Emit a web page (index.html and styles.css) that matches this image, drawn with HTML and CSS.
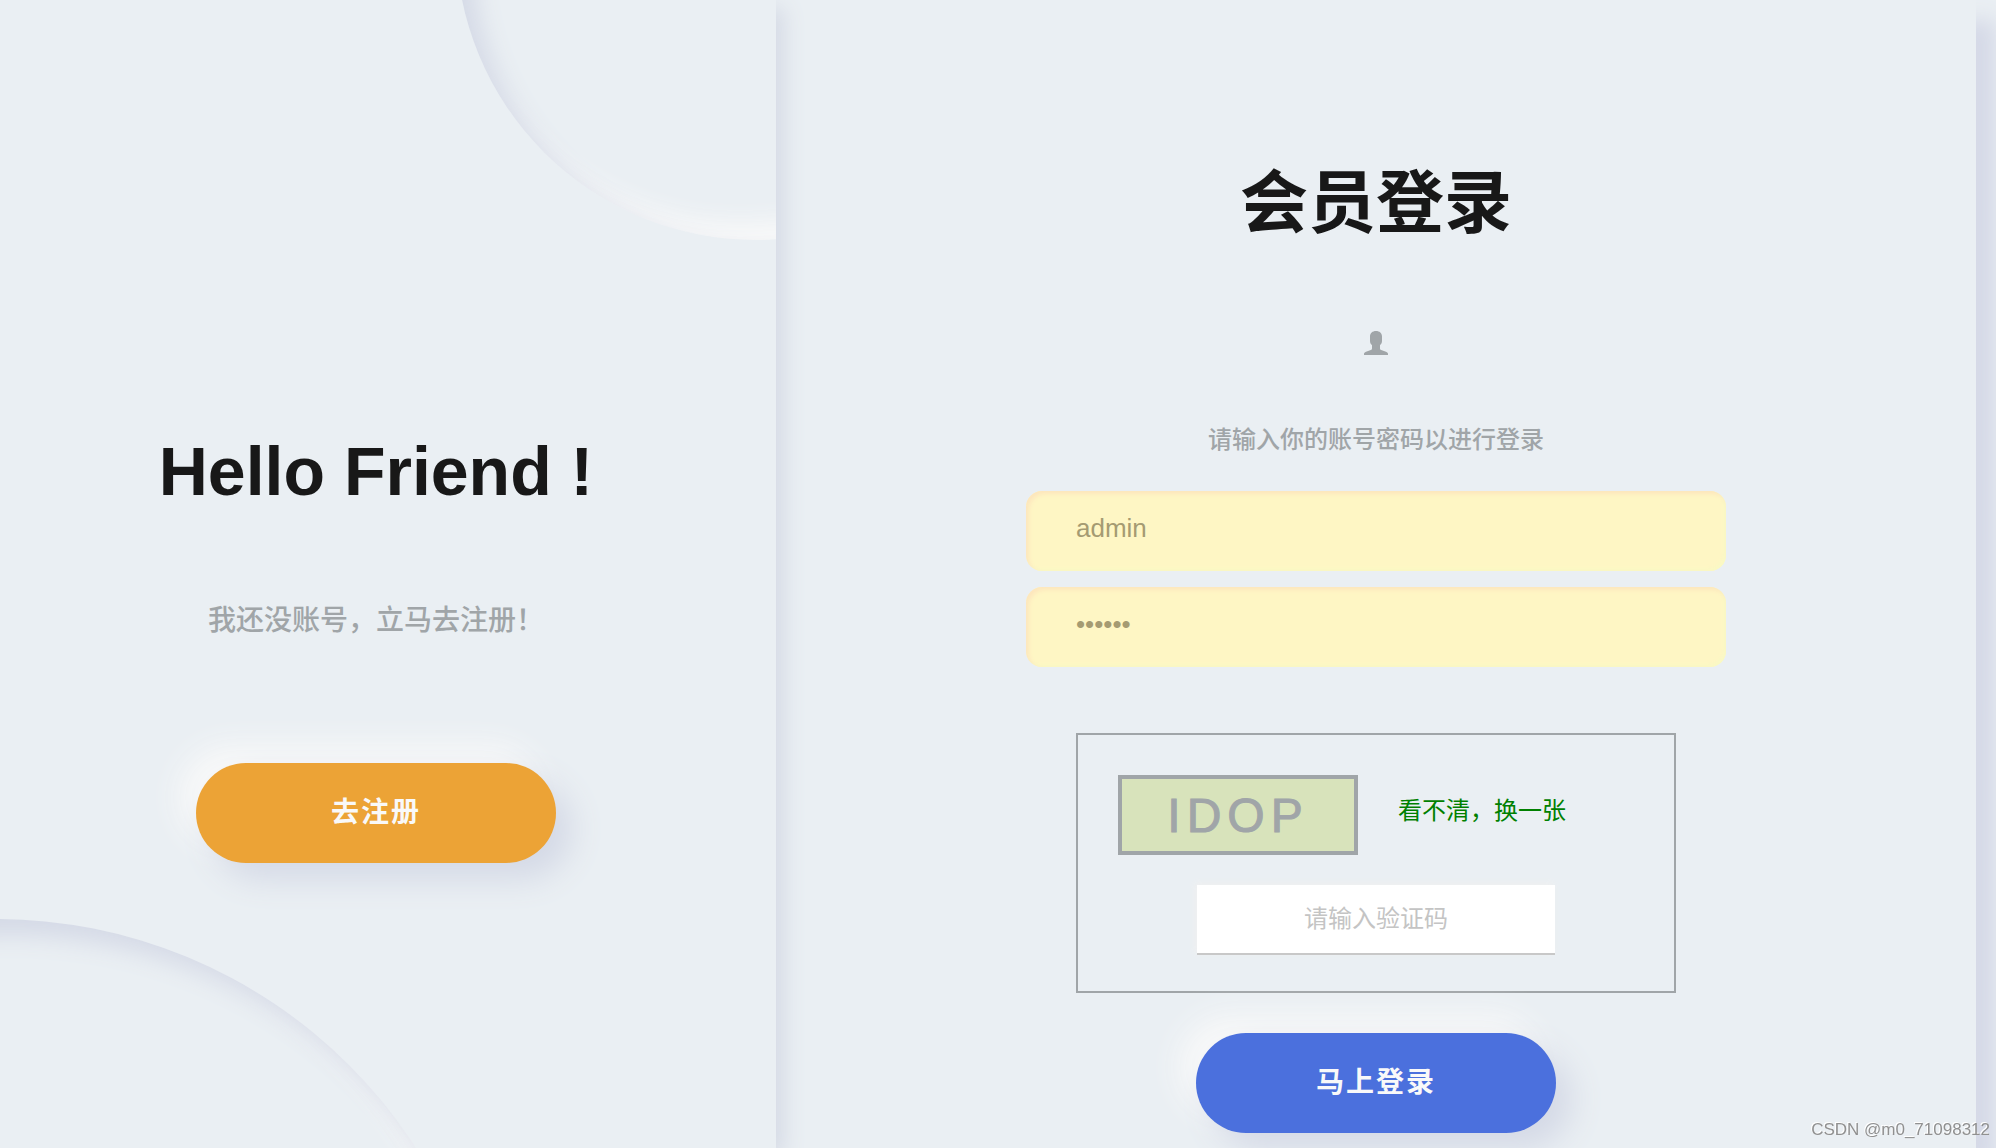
FILE: index.html
```html
<!DOCTYPE html>
<html lang="zh-CN">
<head>
    <meta charset="UTF-8">
    <meta name="viewport" content="width=device-width, initial-scale=1.0">
    <title>会员登录</title>
    <link rel="stylesheet" href="styles.css">
</head>
<body>
    <div class="shell">
        <!-- 左侧切换区 -->
        <aside class="switch">
            <div class="circle circle-bottom"></div>
            <div class="circle circle-top"></div>
            <h2 class="title">Hello Friend !</h2>
            <p class="description">我还没账号，立马去注册！</p>
            <button class="button button-register" type="button">去注册</button>
        </aside>

        <!-- 登录表单 -->
        <main class="main">
            <form class="form" onsubmit="return false">
                <h1 class="title">会员登录</h1>
                <svg class="user-icon" viewBox="0 0 24 24" aria-hidden="true">
                    <path d="M12 0C8.500 0 6 2.200 6 5.500V10c0 1.800.800 3.200 2 4.200v3.300c0 .900-.400 1.300-1.200 1.600L2 20.800C.700 21.300 0 22 0 23v1h24v-1c0-1-.700-1.700-2-2.200l-4.800-1.700c-.800-.300-1.200-.700-1.200-1.600v-3.300c1.200-1 2-2.400 2-4.200V5.500C18 2.200 15.500 0 12 0z"/>
                </svg>
                <p class="hint">请输入你的账号密码以进行登录</p>
                <input class="field" type="text" value="admin" aria-label="账号">
                <input class="field" type="password" value="123456" aria-label="密码">

                <div class="captcha">
                    <div class="captcha-row">
                        <div class="captcha-code">IDOP</div>
                        <a class="captcha-change" href="#">看不清，换一张</a>
                    </div>
                    <input class="captcha-input" type="text" placeholder="请输入验证码" aria-label="验证码">
                </div>

                <button class="button button-login" type="submit">马上登录</button>
            </form>
        </main>
    </div>
    <div class="watermark">CSDN @m0_71098312</div>
</body>
</html>
```

FILE: styles.css
```css
* {
    box-sizing: border-box;
    margin: 0;
    padding: 0;
}
body {
    font-family: "Liberation Sans", Arial, "Noto Sans CJK SC", sans-serif;
    font-size: 24px;
    color: #a0a5a8;
    background: #fff;
    height: 100vh;
    overflow: hidden;
}
.shell {
    display: grid;
    grid-template-columns: 97fr 150fr;
    height: 100vh;
    margin-right: 8px;
    padding-right: 20px;
    background: #eaeff3;
    overflow: hidden;
}

/* 左侧 */
.switch {
    position: relative;
    z-index: 2;
    display: flex;
    flex-direction: column;
    align-items: center;
    padding: 431px 24px 0 0;
    overflow: hidden;
    background: #eaeff3;
    box-shadow: 8px 8px 20px #d5dae5;
}
.circle {
    position: absolute;
    border-radius: 50%;
    box-shadow: inset 16px 16px 24px #d4d9e6, inset -16px -16px 24px #f9f9f9;
}
.circle-bottom {
    width: 1000px;
    height: 1000px;
    top: 919px;
    left: -504px;
}
.circle-top {
    width: 600px;
    height: 600px;
    top: -360px;
    left: 456px;
}
.title {
    font-size: 68px;
    line-height: 80px;
    font-weight: 700;
    color: #181818;
}
.description {
    margin-top: 90px;
    font-size: 28px;
    line-height: 40px;
    font-weight: 500;
}
.button {
    position: relative;
    flex: none;
    width: 360px;
    height: 100px;
    border: none;
    border-radius: 50px;
    padding-bottom: 6px;
    font-family: inherit;
    font-size: 28px;
    font-weight: 700;
    letter-spacing: 2px;
    color: #f9f9f9;
    box-shadow: 16px 16px 32px #d4d9e6, -16px -16px 32px #f9f9f9;
    cursor: pointer;
}
.button-register {
    margin-top: 122px;
    background: #eca336;
}

/* 右侧 */
.main {
    box-shadow: 20px 20px 20px #d5d9e7;
}
.form {
    display: flex;
    flex-direction: column;
    align-items: center;
    padding-top: 163px;
}
.user-icon {
    width: 24px;
    height: 24px;
    margin-top: 88px;
    fill: #a0a5a8;
}
.hint {
    margin-top: 65px;
    margin-bottom: 31px;
    line-height: 40px;
    font-weight: 500;
}
.field {
    width: 700px;
    height: 80px;
    margin-bottom: 16px;
    padding: 0 50px 6px;
    border: none;
    border-radius: 16px;
    outline: none;
    font-family: inherit;
    font-size: 26px;
    color: #a59b72;
    background: #fef6c4;
    box-shadow: inset 3px 3px 4px #fde6bd, inset -2px -2px 4px #f9f9c4;
}

/* 验证码 */
.captcha {
    display: flex;
    flex-direction: column;
    align-items: center;
    width: 600px;
    height: 260px;
    margin-top: 50px;
    border: 2px solid #a0a5a8;
}
.captcha-row {
    display: flex;
    align-self: stretch;
    margin: 40px 40px 30px;
    gap: 40px;
}
.captcha-code {
    width: 240px;
    height: 80px;
    border: 4px solid #a0a5a8;
    background: #d8e3bb;
    text-align: center;
    font-size: 48px;
    line-height: 74px;
    letter-spacing: 6px;
    -webkit-text-stroke: 1px #a0a5a8;
}
.captcha-change {
    line-height: 72px;
    color: #008000;
    text-decoration: none;
}
.captcha-input {
    width: 358px;
    height: 70px;
    border: none;
    border-bottom: 2px solid #c8c8c8;
    outline: none;
    background: #fff;
    text-align: center;
    font-family: inherit;
    font-size: 24px;
    box-shadow: -2px -2px 6px #f0f0f0;
}
.captcha-input::placeholder {
    color: #c4c4c4;
}
.button-login {
    margin-top: 40px;
    background: #4b70dd;
}

.watermark {
    position: fixed;
    right: 14px;
    bottom: 8px;
    z-index: 3;
    font-size: 17px;
    line-height: 20px;
    color: #909090;
    text-shadow: -1px -1px 0 #fff;
}
```
